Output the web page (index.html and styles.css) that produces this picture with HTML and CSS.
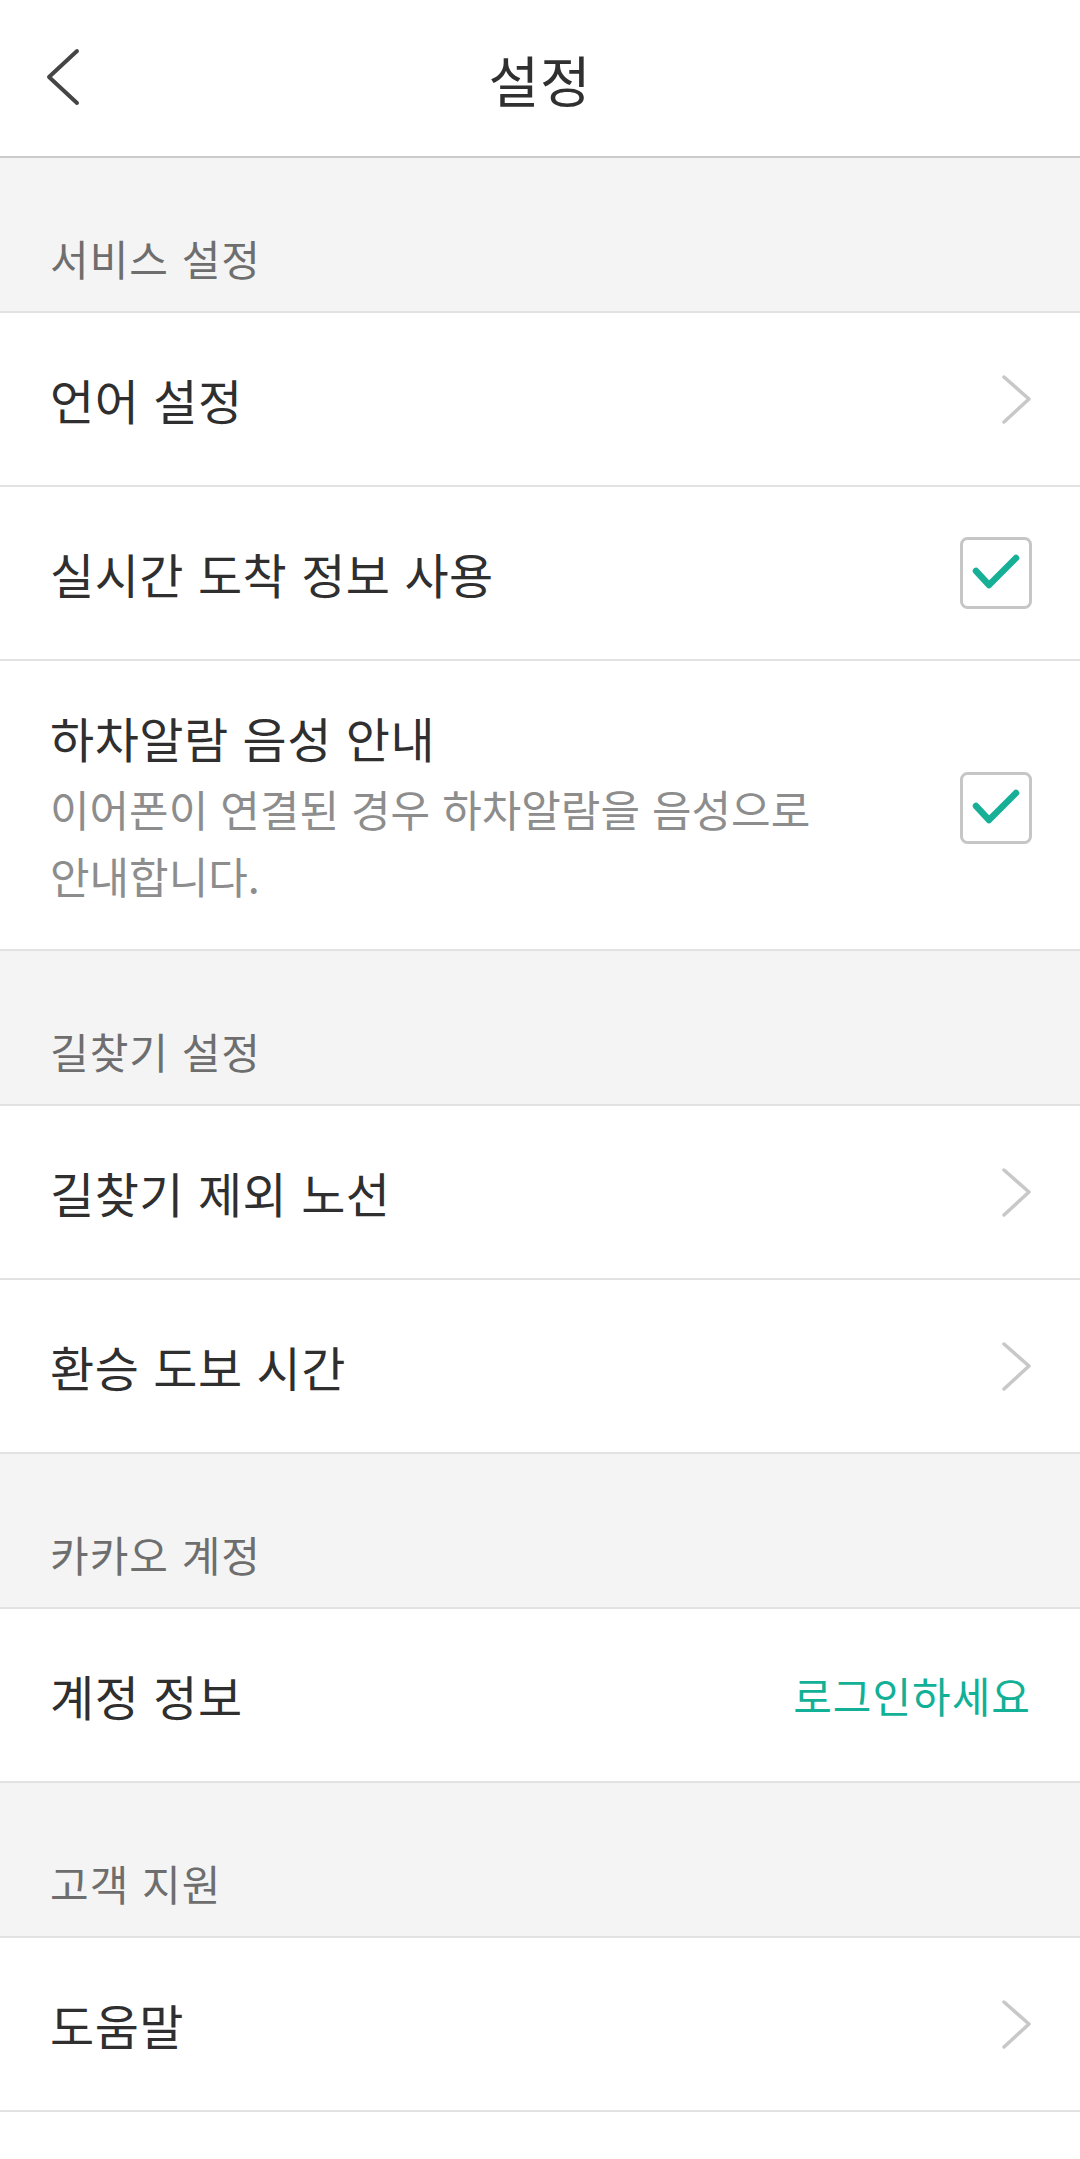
FILE: index.html
```html
<!DOCTYPE html>
<html lang="ko">
  <head>
    <meta charset="UTF-8" />
    <meta name="viewport" content="width=device-width, initial-scale=1.0" />
    <title>설정</title>
    <link rel="stylesheet" href="styles.css">
  </head>
  <body>

      <div class="header">
          <div class="back">
              <svg width="44" height="60" viewBox="0 0 44 60">
                  <polyline points="37,3 9,29 37,55" fill="none" stroke="#454545" stroke-width="4" stroke-linecap="round" stroke-linejoin="round" />
              </svg>
          </div>
          <h1 class="title">설정</h1>
          <div></div>
      </div>

      <div class="section"><span>서비스 설정</span></div>

      <div class="row">
          <span class="label">언어 설정</span>
          <svg class="arrow" width="36" height="54" viewBox="0 0 36 54">
              <polyline points="9,5 34,27 9,50" fill="none" stroke="#c8c8c8" stroke-width="3.5" stroke-linecap="round" stroke-linejoin="round" />
          </svg>
      </div>

      <div class="row">
          <span class="label">실시간 도착 정보 사용</span>
          <svg class="check" width="72" height="72" viewBox="0 0 72 72">
              <rect x="1.5" y="1.5" width="69" height="69" rx="6" fill="#fff" stroke="#c6c6c6" stroke-width="3" />
              <polyline points="16,34 29,48 56,21" fill="none" stroke="#17b096" stroke-width="6.5" stroke-linecap="round" stroke-linejoin="round" />
          </svg>
      </div>

      <div class="row tall">
          <div class="text">
              <div class="label">하차알람 음성 안내</div>
              <div class="desc">이어폰이 연결된 경우 하차알람을 음성으로 안내합니다.</div>
          </div>
          <svg class="check" width="72" height="72" viewBox="0 0 72 72">
              <rect x="1.5" y="1.5" width="69" height="69" rx="6" fill="#fff" stroke="#c6c6c6" stroke-width="3" />
              <polyline points="16,34 29,48 56,21" fill="none" stroke="#17b096" stroke-width="6.5" stroke-linecap="round" stroke-linejoin="round" />
          </svg>
      </div>

      <div class="section"><span>길찾기 설정</span></div>

      <div class="row">
          <span class="label">길찾기 제외 노선</span>
          <svg class="arrow" width="36" height="54" viewBox="0 0 36 54">
              <polyline points="9,5 34,27 9,50" fill="none" stroke="#c8c8c8" stroke-width="3.5" stroke-linecap="round" stroke-linejoin="round" />
          </svg>
      </div>

      <div class="row">
          <span class="label">환승 도보 시간</span>
          <svg class="arrow" width="36" height="54" viewBox="0 0 36 54">
              <polyline points="9,5 34,27 9,50" fill="none" stroke="#c8c8c8" stroke-width="3.5" stroke-linecap="round" stroke-linejoin="round" />
          </svg>
      </div>

      <div class="section"><span>카카오 계정</span></div>

      <div class="row">
          <span class="label">계정 정보</span>
          <span class="login">로그인하세요</span>
      </div>

      <div class="section"><span>고객 지원</span></div>

      <div class="row">
          <span class="label">도움말</span>
          <svg class="arrow" width="36" height="54" viewBox="0 0 36 54">
              <polyline points="9,5 34,27 9,50" fill="none" stroke="#c8c8c8" stroke-width="3.5" stroke-linecap="round" stroke-linejoin="round" />
          </svg>
      </div>

  </body>
</html>
```

FILE: styles.css
```css
* {
    box-sizing: border-box;
}

body {
    margin: 0;
    background: #fff;
    font-family: "Noto Sans CJK KR", "Noto Sans", sans-serif;
    color: #2f2f2f;
}

.header {
    display: grid;
    grid-template-columns: 1fr auto 1fr;
    align-items: center;

    height: 158px;
    border-bottom: 2px solid #cbcbcb;
}

.back {
    padding-left: 40px;
    display: flex;
    align-items: center;
}

.back svg {
    display: block;
}

.title {
    margin: 0;
    font-size: 55px;
    font-weight: normal;
    line-height: 70px;
    letter-spacing: 1px;
    color: #303030;
}

.section {
    display: flex;
    align-items: flex-end;

    height: 155px;
    padding: 0 50px 28px;
    background: #f4f4f4;
    border-bottom: 2px solid #e2e2e2;
}

.section span {
    font-size: 42px;
    line-height: 50px;
    letter-spacing: 1px;
    color: #6e6e6e;
}

.row {
    display: flex;
    align-items: center;
    justify-content: space-between;

    height: 174px;
    padding: 0 49px 0 50px;
    border-bottom: 2px solid #e2e2e2;
}

.row .label {
    font-size: 48px;
    line-height: 60px;
    letter-spacing: 0.5px;
    color: #2f2f2f;
}

.row.tall {
    height: auto;
    padding-top: 46px;
    padding-bottom: 40px;
}

.text {
    max-width: 800px;
}

.desc {
    margin-top: 8px;
    font-size: 43px;
    line-height: 67px;
    color: #8d8d8d;
}

.arrow,
.check {
    display: block;
    flex-shrink: 0;
}

.check {
    margin-right: -1px;
}

.login {
    font-size: 42px;
    line-height: 50px;
    letter-spacing: 1px;
    color: #12b096;
}
```
